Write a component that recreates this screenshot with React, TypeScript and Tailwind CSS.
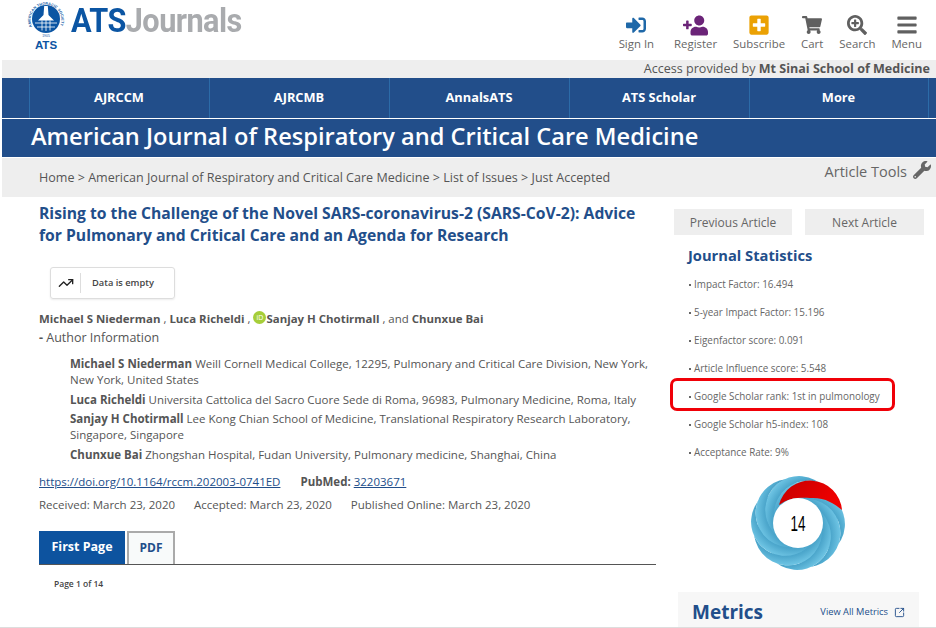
import { SquareArrowOutUpRight, TrendingUp } from 'lucide-react'
import { FaBars, FaPlusSquare, FaSearchPlus, FaShoppingCart, FaSignInAlt, FaUserPlus, FaWrench } from 'react-icons/fa'

const navItems = ['AJRCCM', 'AJRCMB', 'AnnalsATS', 'ATS Scholar', 'More']

const stats = [
  'Impact Factor: 16.494',
  '5-year Impact Factor: 15.196',
  'Eigenfactor score: 0.091',
  'Article Influence score: 5.548',
  'Google Scholar rank: 1st in pulmonology',
  'Google Scholar h5-index: 108',
  'Acceptance Rate: 9%',
]

const affiliations = [
  { name: 'Michael S Niederman', text: 'Weill Cornell Medical College, 12295, Pulmonary and Critical Care Division, New York, New York, United States' },
  { name: 'Luca Richeldi', text: 'Universita Cattolica del Sacro Cuore Sede di Roma, 96983, Pulmonary Medicine, Roma, Italy' },
  { name: 'Sanjay H Chotirmall', text: 'Lee Kong Chian School of Medicine, Translational Respiratory Research Laboratory, Singapore, Singapore' },
  { name: 'Chunxue Bai', text: 'Zhongshan Hospital, Fudan University, Pulmonary medicine, Shanghai, China' },
]

function Logo() {
  return (
    <div className="flex items-start">
      <svg width="38" height="50" viewBox="0 0 38 50">
        <defs>
          <path id="sealRing" d="M5 26.5 A15.4 15.4 0 1 1 33 26.5" />
        </defs>
        <text fontSize="3.7" fontWeight="700" fill="#0b55a3" letterSpacing="0.1" fontFamily="Liberation Sans, sans-serif">
          <textPath href="#sealRing">AMERICAN THORACIC SOCIETY</textPath>
        </text>
        <text x="19" y="37" textAnchor="middle" fontSize="3.4" fill="#0b55a3" fontFamily="Liberation Sans, sans-serif">1905</text>
        <circle cx="19" cy="19" r="14" fill="#0b55a3" />
        <path d="M17.2 6h3.6l.7 9 5.5 5.5H11l5.5-5.5z" fill="#fff" />
        <path d="M8 23h22M10 27h18M19 20v11M15 20.5v10M23 20.5v10" stroke="#fff" strokeWidth="0.8" />
        <text x="19" y="48.5" textAnchor="middle" fontSize="11.5" fontWeight="700" fill="#0b55a3" fontFamily="Liberation Sans, sans-serif">ATS</text>
      </svg>
      <div className="ml-[6px] mt-[1px] font-['Roboto',sans-serif] text-[33px] leading-[40px] font-bold tracking-[-0.6px] scale-x-[0.93] origin-left whitespace-nowrap">
        <span className="text-[#0b55a3]">ATS</span>
        <span className="text-[#a9abae]">Journals</span>
      </div>
    </div>
  )
}

function HeaderLink({ label, icon }: { label: string; icon: React.ReactNode }) {
  return (
    <div className="flex flex-col items-center">
      <div className="h-[22px] flex items-center justify-center">{icon}</div>
      <span className="text-[11.4px] leading-[16px] text-[#666]">{label}</span>
    </div>
  )
}

function Donut() {
  const angles = [5, 50, 95, 140, 185, 230, 275, 320]
  return (
    <svg width="100" height="100" viewBox="-50 -50 100 100">
      <defs>
        <radialGradient id="band" gradientUnits="userSpaceOnUse" cx="12" cy="-6" r="50">
          <stop offset="0.5" stopColor="#2f88b4" />
          <stop offset="0.78" stopColor="#4ea8cd" />
          <stop offset="1" stopColor="#78cdeb" />
        </radialGradient>
        <linearGradient id="flare" x1="0" y1="0" x2="1" y2="0.4">
          <stop offset="0" stopColor="#c40000" />
          <stop offset="1" stopColor="#f00000" />
        </linearGradient>
        {/* each band is its circle minus the next circle round */}
        <mask id="crescent" maskUnits="userSpaceOnUse" x="-60" y="-60" width="120" height="120">
          <rect x="-60" y="-60" width="120" height="120" fill="#fff" />
          <circle cx="9.19" cy="-9.19" r="34" fill="#000" />
        </mask>
      </defs>
      <circle r="40" fill="#4ea8cd" />
      {angles.map((a) => (
        <g key={a} transform={`rotate(${a})`}>
          <circle cx="0" cy="-13" r="34" fill="url(#band)" mask="url(#crescent)" />
        </g>
      ))}
      <path d="M-19 -18 A32 32 0 0 1 44 -13 C36 -20 26 -26 12 -25 C2 -26 -10 -25 -19 -18Z" fill="url(#flare)" />
      <circle r="25" fill="#fff" />
      <text x="0" y="8" textAnchor="middle" fontSize="22" fill="#000" textLength="15" lengthAdjust="spacingAndGlyphs" fontFamily="Liberation Sans, sans-serif">14</text>
    </svg>
  )
}

export default function App() {
  return (
    <div className="w-[936px] h-[628px] overflow-hidden bg-white border-b border-[#ddd] font-['Open_Sans',sans-serif] text-[#555]">
      <header className="h-[60px] pl-[27px] pr-[14px] flex justify-between">
        <Logo />
        <div className="flex gap-4 pt-[14px]">
          <HeaderLink label="Sign In" icon={<FaSignInAlt size={20} className="text-[#1f68a8]" />} />
          <div className="ml-1">
            <HeaderLink label="Register" icon={<FaUserPlus size={25} className="text-[#6b2478] scale-x-[-1]" />} />
          </div>
          <HeaderLink label="Subscribe" icon={<FaPlusSquare size={22} className="text-[#eba104]" />} />
          <HeaderLink label="Cart" icon={<FaShoppingCart size={20} className="text-[#606060]" />} />
          <HeaderLink label="Search" icon={<FaSearchPlus size={20} className="text-[#606060]" />} />
          <HeaderLink label="Menu" icon={<FaBars size={22} className="text-[#606060]" />} />
        </div>
      </header>

      <div className="ml-[2px] h-[18px] pr-[6px] bg-[#eeeeee] text-right text-[12.55px] leading-[18px] text-[#555]">
        Access provided by <strong className="font-bold">Mt Sinai School of Medicine</strong>
      </div>

      <nav className="ml-[2px] h-[40px] pl-[27px] bg-[#224e8a] flex">
        {navItems.map((item) => (
          <div key={item} className="w-[180px] h-full border-l border-[#2c6ba8] last:border-r flex items-center justify-center text-white text-[12.8px] font-bold">
            <span className="-ml-[1px]">{item}</span>
          </div>
        ))}
      </nav>

      <div className="ml-[2px] mt-[1px] h-[38px] pl-[29px] bg-[#224e8a] text-white text-[23.6px] leading-[34px] font-semibold">
        American Journal of Respiratory and Critical Care Medicine
      </div>

      <div className="ml-[2px] mt-[1px] h-[39px] pl-[37px] pr-[5px] bg-[#eeeeee] flex justify-between text-[#555]">
        <span className="text-[12.55px] leading-[39px]">Home &gt; American Journal of Respiratory and Critical Care Medicine &gt; List of Issues &gt; Just Accepted</span>
        <span className="flex items-start gap-[6px] pt-[3px] text-[14.5px] leading-[22px] text-[#666]">
          Article Tools <FaWrench size={18} className="text-[#666]" />
        </span>
      </div>

      <main className="flex">
        <section className="w-[656px] pl-[39px] shrink-0">
          <h1 className="mt-[6px] text-[#224e8a] text-[15.7px] leading-[21.5px] font-bold">
            Rising to the Challenge of the Novel SARS-coronavirus-2 (SARS-CoV-2): Advice for Pulmonary and Critical Care and an Agenda for Research
          </h1>

          <div className="ml-[11px] mt-[21px] w-[125px] h-[32px] border border-[#ddd] rounded-[3px] shadow-[0_1px_2px_rgba(0,0,0,0.08)] flex items-center">
            <div className="w-[30px] h-[20px] border-r border-[#ddd] flex items-center justify-center">
              <TrendingUp size={16} strokeWidth={2} className="text-[#222]" />
            </div>
            <span className="ml-[11px] text-[9.3px] font-semibold text-[#444]">Data is empty</span>
          </div>

          <p className="mt-[11px] text-[11.45px] leading-[18px]">
            <strong className="font-bold">Michael S Niederman</strong> , <strong className="font-bold">Luca Richeldi</strong> ,{' '}
            <span className="relative -top-[2px] inline-flex w-[13px] h-[13px] rounded-full bg-[#a6ce39] items-center justify-center text-white text-[7px] leading-none align-middle">iD</span>
            <strong className="font-bold">Sanjay H Chotirmall</strong> , and <strong className="font-bold">Chunxue Bai</strong>
          </p>
          <p className="text-[12.5px] leading-[18px] mt-[1px]"><strong className="font-bold">-</strong> Author Information</p>

          <div className="ml-[31px] mt-[9px] flex flex-col gap-[3.5px] text-[11.5px] leading-[16px]">
            {affiliations.map((a) => (
              <p key={a.name}>
                <strong className="font-bold">{a.name}</strong> {a.text}
              </p>
            ))}
          </div>

          <p className="mt-[10px] text-[11.5px] leading-[18px]">
            <span className="text-[#224e8a] underline">https://doi.org/10.1164/rccm.202003-0741ED</span>
            <strong className="ml-[20px] font-bold">PubMed:</strong> <span className="text-[#224e8a] underline">32203671</span>
          </p>
          <div className="mt-[5px] flex gap-[19px] text-[11.5px] leading-[18px]">
            <span>Received: March 23, 2020</span>
            <span>Accepted: March 23, 2020</span>
            <span>Published Online: March 23, 2020</span>
          </div>

          <div className="mt-[17px] flex gap-[2px] border-b border-[#555] h-[34px] items-end">
            <div className="w-[86px] h-[33px] bg-[#0d539f] text-white text-[12.5px] font-bold flex items-center justify-center">First Page</div>
            <div className="w-[48px] h-[33px] bg-[#f8fafa] border-2 border-b-0 border-[#aaa] text-[#224e8a] text-[12px] font-bold flex items-center justify-center">PDF</div>
          </div>
          <p className="ml-[15px] mt-[13px] text-[8.5px] leading-[12px] font-semibold text-[#444]">Page 1 of 14</p>
        </section>

        <aside className="flex-1 pl-[18px]">
          <div className="mt-[12px] flex gap-[13px]">
            <div className="w-[118px] h-[26px] bg-[#eeeeee] text-[12px] leading-[27px] text-center text-[#666]">Previous Article</div>
            <div className="w-[119px] h-[26px] bg-[#eeeeee] text-[12px] leading-[27px] text-center text-[#666]">Next Article</div>
          </div>
          <h2 className="ml-[14px] mt-[9px] text-[#224e8a] text-[14.7px] leading-[22px] font-bold">Journal Statistics</h2>
          <ul className="ml-[15px] mt-[4px] flex flex-col text-[9.9px] text-[#666]">
            {stats.map((s, i) => (
              <li key={s} className="relative h-[28px] leading-[28px]">
                <span className="inline-block w-[2px] h-[2px] mr-[3px] bg-[#666] align-middle"></span>{s}
                {i === 4 && <div className="absolute -left-[19px] top-[-4px] w-[225px] h-[33px] border-[3px] border-[#f00008] rounded-[7px]" />}
              </li>
            ))}
          </ul>
          <div className="ml-[74px] mt-[7px]">
            <Donut />
          </div>
          <div className="ml-[4px] mt-[19px] w-[241px] h-[40px] pl-[14px] pr-[14px] bg-[#f7f7f7] flex justify-between">
            <span className="text-[#224e8a] text-[19px] leading-[40px] font-bold">Metrics</span>
            <span className="flex items-center gap-[6px] h-[40px] text-[9.3px] text-[#224e8a]">
              View All Metrics <SquareArrowOutUpRight size={11} />
            </span>
          </div>
        </aside>
      </main>
    </div>
  )
}
